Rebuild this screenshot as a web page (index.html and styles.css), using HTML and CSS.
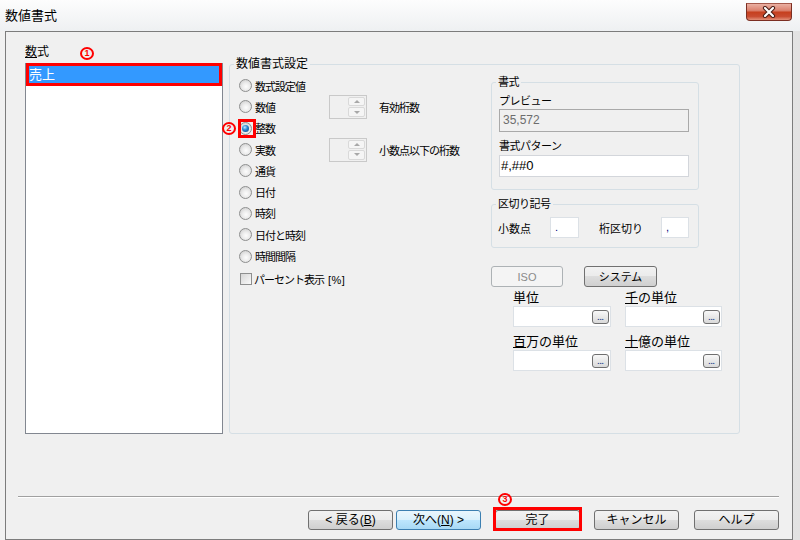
FILE: index.html
```html
<!DOCTYPE html>
<html lang="ja">
  <head>
    <meta charset="UTF-8" />
    <title>数値書式</title>
    <link rel="stylesheet" href="styles.css">
  </head>
  <body>
    <div class="window">
      <div class="titlebar">
        <span class="title">数値書式</span>
        <span class="close">
          <svg width="14" height="12" viewBox="0 0 14 12">
            <path d="M3 2 L11 10 M11 2 L3 10" stroke="#4a1c14" stroke-width="4.2" stroke-linecap="round" fill="none" />
            <path d="M3 2 L11 10 M11 2 L3 10" stroke="#fff" stroke-width="2.2" stroke-linecap="round" fill="none" />
          </svg>
        </span>
      </div>
      <div class="client">
        <div class="main">
          <div class="formula">
            <div class="formula-label">
              <span><u>数</u>式</span>
              <span class="mark mark-1">1</span>
            </div>
            <div class="listbox">
              <div class="list-item">売上</div>
            </div>
          </div>

          <div class="group settings">
            <span class="legend">数値書式設定</span>
            <div class="types">
              <div class="type-row"><span class="radio"></span><span class="type-label">数式設定値</span></div>
              <div class="type-row">
                <span class="radio"></span><span class="type-label">数値</span>
                <span class="spin"><span class="spin-btns"><span class="spin-btn up"></span><span class="spin-btn down"></span></span></span>
                <span class="spin-label">有効桁数</span>
              </div>
              <div class="type-row"><span class="radio checked"><span class="mark mark-2">2</span></span><span class="type-label">整数</span></div>
              <div class="type-row">
                <span class="radio"></span><span class="type-label">実数</span>
                <span class="spin"><span class="spin-btns"><span class="spin-btn up"></span><span class="spin-btn down"></span></span></span>
                <span class="spin-label">小数点以下の桁数</span>
              </div>
              <div class="type-row"><span class="radio"></span><span class="type-label">通貨</span></div>
              <div class="type-row"><span class="radio"></span><span class="type-label">日付</span></div>
              <div class="type-row"><span class="radio"></span><span class="type-label">時刻</span></div>
              <div class="type-row"><span class="radio"></span><span class="type-label">日付と時刻</span></div>
              <div class="type-row"><span class="radio"></span><span class="type-label">時間間隔</span></div>
              <div class="check-row"><span class="checkbox"></span><span>パーセント表示<span class="pct">[%]</span></span></div>
            </div>

            <div class="format">
              <div class="group fmt-group">
                <span class="legend small">書式</span>
                <div class="fmt-label">プレビュー</div>
                <div class="preview">35,572</div>
                <div class="fmt-label pattern-label">書式パターン</div>
                <div class="pattern">#,##0</div>
              </div>

              <div class="group sep-group">
                <span class="legend small">区切り記号</span>
                <div class="sep-row">
                  <span class="sep-label">小数点</span>
                  <span class="small-input">.</span>
                  <span class="sep-label thousands">桁区切り</span>
                  <span class="small-input narrow">,</span>
                </div>
              </div>

              <div class="fmt-buttons">
                <button class="btn iso" disabled>ISO</button>
                <button class="btn system">システム</button>
              </div>

              <div class="units">
                <div class="unit">
                  <div class="unit-label">単位</div>
                  <div class="unit-input"><span class="dots">...</span></div>
                </div>
                <div class="unit">
                  <div class="unit-label"><u>千</u>の単位</div>
                  <div class="unit-input"><span class="dots">...</span></div>
                </div>
                <div class="unit">
                  <div class="unit-label"><u>百</u>万の単位</div>
                  <div class="unit-input"><span class="dots">...</span></div>
                </div>
                <div class="unit">
                  <div class="unit-label"><u>十</u>億の単位</div>
                  <div class="unit-input"><span class="dots">...</span></div>
                </div>
              </div>
            </div>
          </div>
        </div>

        <div class="separator"></div>

        <div class="footer">
          <button class="btn back">&lt; 戻る(<u>B</u>)</button>
          <button class="btn next">次へ(<u>N</u>) &gt;</button>
          <button class="btn finish">完了<span class="mark mark-3">3</span></button>
          <button class="btn cancel">キャンセル</button>
          <button class="btn help">ヘルプ</button>
        </div>
      </div>
    </div>
  </body>
</html>
```

FILE: styles.css
```css
*,
*::before,
*::after {
  box-sizing: border-box;
}

body {
  margin: 0;
  width: 800px;
  height: 540px;
  overflow: hidden;
  font-family: "Liberation Sans", "Noto Sans CJK JP", sans-serif;
  font-size: 12px;
  color: #000;
  background: #f3f3f3;
}

.window {
  height: 540px;
  background: linear-gradient(to right, #f1f1f1 0, #fbfbfb 40%, #f4f4f4 75%, #e2e2e2 100%);
}

/* title bar */

.titlebar {
  height: 31px;
  display: flex;
  justify-content: space-between;
  padding: 0 8px 0 5px;
  background: linear-gradient(to bottom, #fdfdfd, #eef0f2);
}

.title {
  margin-top: 8px;
  font-size: 13px;
  line-height: 16px;
}

.close {
  margin-top: 3px;
  width: 46px;
  height: 18px;
  border: 1px solid #7b2e22;
  border-top-color: #a5594b;
  border-radius: 0 0 4px 4px;
  background: linear-gradient(#eab0a2 0, #db826f 40%, #c6401f 52%, #c94c31 78%, #e2917a 100%);
  display: flex;
  align-items: center;
  justify-content: center;
}

/* dialog body */

.client {
  margin-left: 5px;
  width: 788px;
  height: 509px;
  border: 1px solid #7c7c7c;
  background: #f0f0f0;
}

.main {
  display: flex;
  height: 402px;
  padding: 12px 0 0 19px;
}

.formula {
  width: 198px;
  flex: none;
}

.formula-label {
  display: flex;
  align-items: flex-start;
  height: 19px;
  padding-top: 1px;
  font-size: 12px;
  line-height: 15px;
}

.mark {
  width: 14px;
  height: 13px;
  border: 2px solid #f00;
  border-radius: 50%;
  color: #f00;
  font: bold 9px/9px "Liberation Sans", sans-serif;
  letter-spacing: 0;
  text-align: center;
}

.mark-1 {
  margin: 2px 0 0 31px;
}

.mark-2 {
  position: absolute;
  left: -18px;
  top: -1px;
}

.mark-3 {
  position: absolute;
  left: 2px;
  top: -18px;
}

.listbox {
  height: 371px;
  border: 1px solid #828790;
  background: #fff;
}

.list-item {
  margin-top: -1px;
  height: 23px;
  border: 3px solid #f00;
  background: #3399ff;
  color: #fff;
  font-size: 13px;
  line-height: 17px;
}

/* group boxes */

.group {
  position: relative;
  border: 1px solid #d5dfe5;
  border-radius: 3px;
}

.legend {
  position: absolute;
  top: -8px;
  left: 4px;
  padding: 0 2px;
  background: #f0f0f0;
  font-size: 12px;
  line-height: 14px;
}

.legend.small {
  font-size: 11px;
  letter-spacing: -0.5px;
}

.settings {
  margin: 20px 0 0 6px;
  width: 511px;
  height: 370px;
  padding: 10px 0 0 9px;
  display: flex;
}

.types {
  width: 252px;
  flex: none;
}

.type-row {
  display: flex;
  align-items: center;
  height: 21.3px;
  font-size: 11px;
  letter-spacing: -1px;
}

.radio {
  position: relative;
  width: 13px;
  height: 13px;
  flex: none;
  margin-right: 3px;
  border: 1px solid #8e8f8f;
  border-radius: 50%;
  background: radial-gradient(circle at 55% 60%, #fdfdfd 0, #ececec 40%, #c6c6c6 100%);
}

.radio.checked::after {
  content: "";
  position: absolute;
  left: 2px;
  top: 2px;
  width: 7px;
  height: 7px;
  border-radius: 50%;
  background: radial-gradient(circle at 40% 35%, #c4e9ff 0, #2b8bd6 40%, #0b3d72 100%);
}

.radio.checked::before {
  content: "";
  position: absolute;
  left: -2px;
  top: -4px;
  width: 18px;
  height: 19px;
  border: 3px solid #f00;
}

.type-label {
  width: 74px;
  flex: none;
}

.spin {
  width: 38px;
  height: 24px;
  flex: none;
  display: flex;
  justify-content: flex-end;
  padding: 1px;
  border: 1px solid #c9c9c9;
  background: #f0f0f0;
}

.spin-btns {
  width: 17px;
  display: flex;
  flex-direction: column;
  gap: 1px;
}

.spin-btn {
  flex: 1;
  display: flex;
  align-items: center;
  justify-content: center;
  border: 1px solid #d9d9d9;
  border-radius: 2px;
  background: #f5f5f5;
}

.spin-btn::after {
  content: "";
  width: 0;
  height: 0;
  border-left: 3px solid transparent;
  border-right: 3px solid transparent;
}

.spin-btn.up::after {
  border-bottom: 3px solid #a8a8a8;
}

.spin-btn.down::after {
  border-top: 3px solid #a8a8a8;
}

.spin-label {
  margin-left: 12px;
}

.check-row {
  display: flex;
  align-items: center;
  height: 21px;
  margin-top: 2px;
  font-size: 11px;
  letter-spacing: -1px;
}

.pct {
  margin-left: 4px;
  letter-spacing: 0.5px;
}

.checkbox {
  width: 12px;
  height: 12px;
  margin: 0 2px 0 1px;
  border: 1px solid #8e8f8f;
  background: linear-gradient(135deg, #d6d6d6, #fafafa);
}

/* format column */

.format {
  margin-top: 7px;
  width: 249px;
}

.fmt-group {
  width: 208px;
  padding: 10px 9px 12px 7px;
}

.fmt-label {
  font-size: 11px;
  line-height: 16px;
  letter-spacing: -0.5px;
}

.pattern-label {
  margin-top: 6px;
}

.preview {
  height: 23px;
  padding-left: 3px;
  border: 1px solid #a9a9a9;
  background: #f0f0f0;
  color: #6d6d6d;
  font-size: 12px;
  line-height: 21px;
}

.pattern {
  margin-top: 1px;
  height: 22px;
  padding-left: 1px;
  border: 1px solid #d3d6db;
  background: #fff;
  font-size: 13px;
  line-height: 20px;
}

.sep-group {
  margin-top: 14px;
  width: 208px;
  padding: 12px 9px 9px 6px;
}

.sep-row {
  display: flex;
  align-items: center;
  height: 21px;
  font-size: 11px;
}

.sep-label {
  width: 52px;
}

.sep-label.thousands {
  margin-left: 20px;
  width: 62px;
}

.small-input {
  width: 29px;
  height: 21px;
  padding-left: 4px;
  border: 1px solid #dce1e6;
  background: #fff;
  color: #000080;
  font-size: 11px;
  line-height: 18px;
}

.small-input.narrow {
  width: 28px;
}

.btn {
  height: 20px;
  padding: 0;
  border: 1px solid #707070;
  border-radius: 3px;
  background: linear-gradient(#f2f2f2 0, #ebebeb 50%, #dddddd 50%, #cfcfcf 100%);
  font-family: inherit;
  font-size: 12px;
  line-height: 18px;
  color: #000;
  text-align: center;
}

.fmt-buttons {
  display: flex;
  gap: 21px;
  margin-top: 18px;
}

.fmt-buttons .btn {
  height: 21px;
  font-size: 11px;
}

.iso {
  width: 72px;
  border-color: #adb2b5;
  background: #f4f4f4;
  color: #8a8a8a;
}

.system {
  width: 73px;
}

.units {
  display: grid;
  grid-template-columns: 98px 97px;
  column-gap: 14px;
  row-gap: 7px;
  margin: 3px 0 0 22px;
}

.unit-label {
  font-size: 13px;
  line-height: 16px;
}

.unit-input {
  height: 21px;
  display: flex;
  justify-content: flex-end;
  align-items: center;
  padding-right: 1px;
  border: 1px solid #dce1e6;
  background: #fff;
}

.dots {
  width: 17px;
  height: 14px;
  padding-top: 3px;
  border: 1px solid #6f6f6f;
  border-radius: 3px;
  background: linear-gradient(#f8f8f8, #d9d9d9);
  color: #2b3e8f;
  font: bold 8px/8px "Liberation Sans", sans-serif;
  text-align: center;
}

/* footer */

.separator {
  margin: 62px 13px 0 12px;
  border-top: 1px solid #a0a0a0;
  border-bottom: 1px solid #fff;
}

.footer {
  display: flex;
  justify-content: flex-end;
  margin-top: 12px;
  padding-right: 13px;
}

.footer .btn {
  width: 85px;
}

.next {
  margin-left: 3px;
  border-color: #3c7fb1;
  background: linear-gradient(#eaf6fd 0, #d9f0fc 50%, #bee6fd 50%, #a7d9f5 100%);
}

.finish {
  position: relative;
  margin-left: 14px;
}

.finish::before {
  content: "";
  position: absolute;
  left: -3px;
  right: -3px;
  top: -4px;
  bottom: -2px;
  border: 3px solid #f00;
}

.cancel {
  margin-left: 14px;
}

.help {
  margin-left: 15px;
}
```
